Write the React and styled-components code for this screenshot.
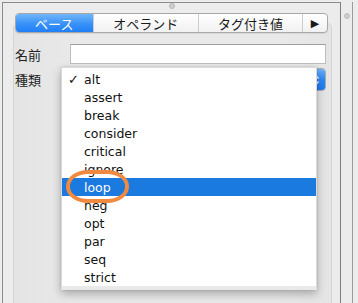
import React from 'react'
import styled, {createGlobalStyle} from 'styled-components'

const kinds = ['alt', 'assert', 'break', 'consider', 'critical', 'ignore', 'loop', 'neg', 'opt', 'par', 'seq', 'strict']
const tabs = [
  {label: 'ベース', w: 78, on: true},
  {label: 'オペランド', w: 106},
  {label: 'タグ付き値', w: 105},
  {label: '▶', w: 24, arrow: true},
]

const App = () => {
  return (
    <Page>
      <Global />
      <Frame>
        <Handle><Dot /></Handle>
        <Panel>
          <TabBar>
            {tabs.map((t) => (
              <Tab key={t.label} $on={t.on} $arrow={t.arrow} style={{width: t.w}}>
                {t.label}
              </Tab>
            ))}
          </TabBar>
          <Form>
            <Row>
              <Label>名前</Label>
              <Field />
            </Row>
            <Row $tall>
              <Label>種類</Label>
              <Select>
                <Cap>
                  <svg width="7" height="12" viewBox="0 0 7 12">
                    <path d="M3.5 1 L6.5 4.5 H0.5 Z M3.5 11 L6.5 7.5 H0.5 Z" fill="#fff" />
                  </svg>
                </Cap>
              </Select>
            </Row>
          </Form>
        </Panel>
        <Menu>
          {kinds.map((k) => (
            <Item key={k} $hot={k === 'loop'}>
              <Check>{k === 'alt' ? '✓' : ''}</Check>
              {k}
            </Item>
          ))}
        </Menu>
        <Ring />
      </Frame>
      <Side><SideDot /></Side>
    </Page>
  )
}

export default App

const Global = createGlobalStyle`
body{
  margin:0;
  background:#ececec;
  font-family:"DejaVu Sans", sans-serif;
}
`
const Page = styled.div`
display:flex;
width:358px;
height:303px;
overflow:hidden;
padding:2px 0 0 2px;
box-sizing:border-box;
`
const Frame = styled.div`
position:relative;
width:337px;
height:320px;
border-top:1px solid #8c8c8c;
border-left:1px solid #8c8c8c;
border-right:1px solid #7e7e7e;
flex-shrink:0;
`
const Handle = styled.div`
height:8px;
display:flex;
justify-content:center;
`
const Dot = styled.div`
width:6px;
height:6px;
border-radius:50%;
background:#cfcfcf;
border:1px solid #b8b8b8;
box-sizing:border-box;
`
const Panel = styled.div`
margin:12px 0 0 10px;
width:319px;
height:300px;
box-sizing:border-box;
border:1px solid #d4d4d4;
border-radius:5px;
background:linear-gradient(to right, #e4e4e4, #e9e9e9 20%, #e9e9e9 85%, #e5e5e5);
`
const TabBar = styled.div`
position:relative;
display:flex;
margin:-11px 0 0 1px;
width:313px;
height:20px;
box-sizing:border-box;
border:1px solid #a8a8a8;
border-radius:4px;
overflow:hidden;
background:linear-gradient(#ffffff, #f1f1f1);
box-shadow:0 1px 1px rgba(0,0,0,0.08);
`
const Tab = styled.div`
display:flex;
align-items:center;
justify-content:center;
box-sizing:border-box;
font-family:${(p) => (p.$arrow ? '"DejaVu Sans", sans-serif' : '"Noto Sans CJK JP", sans-serif')};
font-size:${(p) => (p.$arrow ? '11px' : '13px')};
color:${(p) => (p.$on ? '#fff' : '#1a1a1a')};
background:${(p) => (p.$on ? 'linear-gradient(#72b6fb, #3d94f8 50%, #1f7ff6)' : 'transparent')};
border-right:1px solid #cdcdcd;
&:last-child{border-right:none;}
`
const Form = styled.div`
padding:11px 0 0 1px;
display:flex;
flex-direction:column;
gap:4px;
`
const Row = styled.div`
display:flex;
align-items:center;
height:${(p) => (p.$tall ? '23px' : '20px')};
`
const Label = styled.div`
width:55px;
font-family:"Noto Sans CJK JP", sans-serif;
font-size:13px;
color:#222;
`
const Field = styled.div`
width:256px;
height:20px;
box-sizing:border-box;
background:#fff;
border:1px solid #bdbdbd;
border-top-color:#9e9e9e;
`
const Select = styled.div`
width:256px;
height:23px;
box-sizing:border-box;
display:flex;
justify-content:flex-end;
background:linear-gradient(#fff, #f0f0f0);
border:1px solid #a9a9a9;
border-radius:4px;
overflow:hidden;
`
const Cap = styled.div`
width:17px;
display:flex;
align-items:center;
justify-content:center;
background:linear-gradient(#6cb2fb, #2b86f7 55%, #1f7cf3);
`
const Menu = styled.div`
position:absolute;
left:58px;
top:64px;
width:256px;
box-sizing:border-box;
padding-top:2px;
background:#fff;
border:1px solid #dadada;
border-bottom:4px solid #e9e9e9;
box-shadow:0 4px 9px rgba(0,0,0,0.28), 0 0 2px rgba(0,0,0,0.15);
`
const Item = styled.div`
display:flex;
align-items:center;
height:18px;
padding-left:6px;
font-size:12.5px;
color:${(p) => (p.$hot ? '#fff' : '#111')};
background:${(p) => (p.$hot ? '#1b7ae0' : 'transparent')};
`
const Check = styled.span`
width:16px;
font-size:13px;
font-weight:bold;
`
const Ring = styled.div`
position:absolute;
left:63px;
top:167px;
width:63px;
height:33px;
box-sizing:border-box;
border:4px solid #ef8a40;
border-radius:22px / 16px;
`
const Side = styled.div`
width:11px;
height:320px;
border-right:1px solid #9a9a9a;
display:flex;
justify-content:center;
padding-top:11px;
box-sizing:content-box;
`
const SideDot = styled.div`
width:6px;
height:6px;
border-radius:50%;
background:#cdcdcd;
border:1px solid #bdbdbd;
box-sizing:border-box;
`
